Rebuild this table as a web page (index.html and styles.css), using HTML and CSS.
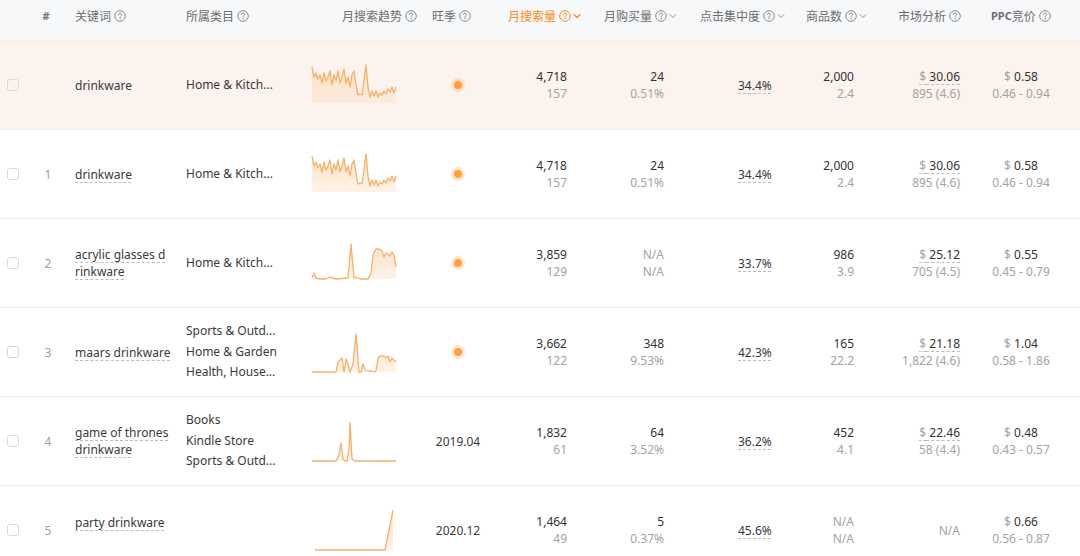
FILE: index.html
```html
<!DOCTYPE html>
<html lang="zh-CN">
<head>
<meta charset="utf-8">
<title>关键词列表</title>
<link rel="stylesheet" href="styles.css">
</head>
<body>
<svg width="0" height="0" class="defs">
  <defs>
    <linearGradient id="sparkfill" x1="0" y1="0" x2="0" y2="1">
      <stop offset="0" stop-color="#fdd7b0" stop-opacity="0.75"/>
      <stop offset="1" stop-color="#fde3c9" stop-opacity="0.45"/>
    </linearGradient>
    <symbol id="q" viewBox="0 0 12 12">
      <circle cx="6" cy="6" r="5.3" fill="none" stroke="currentColor" stroke-width="1"/>
      <path d="M4.4 4.7c0-.95.72-1.6 1.62-1.6.9 0 1.6.6 1.6 1.42 0 .7-.42 1-.9 1.32-.38.26-.62.5-.62 1.02v.34" fill="none" stroke="currentColor" stroke-width="1" stroke-linecap="round"/>
      <circle cx="6.1" cy="8.75" r="0.65" fill="currentColor"/>
    </symbol>
    <symbol id="chev" viewBox="0 0 8 8">
      <path d="M1 2.6 4 5.4 7 2.6" fill="none" stroke="currentColor" stroke-width="1.3" stroke-linecap="round" stroke-linejoin="round"/>
    </symbol>
  </defs>
</svg>
<div class="table">
  <div class="row head">
    <div class="c c1"></div>
    <div class="c c2 hc-center">#</div>
    <div class="c c3 h3">关键词<svg class="qi"><use href="#q"/></svg></div>
    <div class="c c4 h4">所属类目<svg class="qi"><use href="#q"/></svg></div>
    <div class="c c5 h5">月搜索趋势<svg class="qi"><use href="#q"/></svg></div>
    <div class="c c6 h6">旺季<svg class="qi"><use href="#q"/></svg></div>
    <div class="c c7 h7 active">月搜索量<svg class="qi"><use href="#q"/></svg><svg class="ch"><use href="#chev"/></svg></div>
    <div class="c c8 h8">月购买量<svg class="qi"><use href="#q"/></svg><svg class="ch"><use href="#chev"/></svg></div>
    <div class="c c9 h9">点击集中度<svg class="qi"><use href="#q"/></svg><svg class="ch"><use href="#chev"/></svg></div>
    <div class="c c10 h10">商品数<svg class="qi"><use href="#q"/></svg><svg class="ch"><use href="#chev"/></svg></div>
    <div class="c c11 h11">市场分析<svg class="qi"><use href="#q"/></svg></div>
    <div class="c c12 h12"><span class="ppc">PPC</span>竞价<svg class="qi"><use href="#q"/></svg></div>
  </div>

  <!-- row 0 (hovered) -->
  <div class="row body hl">
    <div class="c c1"><span class="cb"></span></div>
    <div class="c c2 idx"></div>
    <div class="c c3 kw"><span>drinkware</span></div>
    <div class="c c4 cat"><div>Home &amp; Kitch...</div></div>
    <div class="c c5 trend">
      <svg class="spark" viewBox="0 0 84 40">
        <path class="area" d="M0 2 L2 12 L4 8 L6 14 L8 10 L10 18 L12 8 L14 16 L16 12 L18 6 L20 20 L22 10 L24 16 L26 6 L28 18 L30 12 L32 4 L34 18 L36 12 L38 22 L40 10 L42 6 L44 20 L46 30 L48 29 L50 30 L52 16 L54 0 L56 22 L58 32 L60 26 L62 31 L64 26 L66 32 L68 28 L70 30 L72 26 L74 29 L76 24 L78 27 L80 22 L82 28 L84 22 L84 38 L0 38 Z"/>
        <polyline class="line" points="0,2 2,12 4,8 6,14 8,10 10,18 12,8 14,16 16,12 18,6 20,20 22,10 24,16 26,6 28,18 30,12 32,4 34,18 36,12 38,22 40,10 42,6 44,20 46,30 48,29 50,30 52,16 54,0 56,22 58,32 60,26 62,31 64,26 66,32 68,28 70,30 72,26 74,29 76,24 78,27 80,22 82,28 84,22"/>
      </svg>
    </div>
    <div class="c c6 season"><span class="dot"></span></div>
    <div class="c c7 num"><div class="p">4,718</div><div class="s">157</div></div>
    <div class="c c8 num"><div class="p">24</div><div class="s">0.51%</div></div>
    <div class="c c9 conc"><span class="u">34.4%</span></div>
    <div class="c c10 num"><div class="p">2,000</div><div class="s">2.4</div></div>
    <div class="c c11 num"><div class="p"><span class="u"><span class="cur">$</span> 30.06</span></div><div class="s">895 (4.6)</div></div>
    <div class="c c12 ppcv"><div class="p"><span class="cur">$</span> 0.58</div><div class="s">0.46 - 0.94</div></div>
  </div>

  <!-- row 1 -->
  <div class="row body">
    <div class="c c1"><span class="cb"></span></div>
    <div class="c c2 idx">1</div>
    <div class="c c3 kw"><span class="u">drinkware</span></div>
    <div class="c c4 cat"><div>Home &amp; Kitch...</div></div>
    <div class="c c5 trend">
      <svg class="spark" viewBox="0 0 84 40">
        <path class="area" d="M0 2 L2 12 L4 8 L6 14 L8 10 L10 18 L12 8 L14 16 L16 12 L18 6 L20 20 L22 10 L24 16 L26 6 L28 18 L30 12 L32 4 L34 18 L36 12 L38 22 L40 10 L42 6 L44 20 L46 30 L48 29 L50 30 L52 16 L54 0 L56 22 L58 32 L60 26 L62 31 L64 26 L66 32 L68 28 L70 30 L72 26 L74 29 L76 24 L78 27 L80 22 L82 28 L84 22 L84 38 L0 38 Z"/>
        <polyline class="line" points="0,2 2,12 4,8 6,14 8,10 10,18 12,8 14,16 16,12 18,6 20,20 22,10 24,16 26,6 28,18 30,12 32,4 34,18 36,12 38,22 40,10 42,6 44,20 46,30 48,29 50,30 52,16 54,0 56,22 58,32 60,26 62,31 64,26 66,32 68,28 70,30 72,26 74,29 76,24 78,27 80,22 82,28 84,22"/>
      </svg>
    </div>
    <div class="c c6 season"><span class="dot"></span></div>
    <div class="c c7 num"><div class="p">4,718</div><div class="s">157</div></div>
    <div class="c c8 num"><div class="p">24</div><div class="s">0.51%</div></div>
    <div class="c c9 conc"><span class="u">34.4%</span></div>
    <div class="c c10 num"><div class="p">2,000</div><div class="s">2.4</div></div>
    <div class="c c11 num"><div class="p"><span class="u"><span class="cur">$</span> 30.06</span></div><div class="s">895 (4.6)</div></div>
    <div class="c c12 ppcv"><div class="p"><span class="cur">$</span> 0.58</div><div class="s">0.46 - 0.94</div></div>
  </div>

  <!-- row 2 -->
  <div class="row body">
    <div class="c c1"><span class="cb"></span></div>
    <div class="c c2 idx">2</div>
    <div class="c c3 kw"><span class="u">acrylic glasses d<br>rinkware</span></div>
    <div class="c c4 cat"><div>Home &amp; Kitch...</div></div>
    <div class="c c5 trend">
      <svg class="spark" viewBox="0 0 84 40">
        <path class="area" d="M0 35 L2 30 L4 35 L8 36 L14 36 L18 34 L20 35 L24 36 L36 35 L39 1 L42 35 L44 34 L48 36 L56 36 L59 30 L61 12 L64 6 L67 6 L70 8 L72 14 L74 10 L76 11 L78 13 L80 9 L82 12 L84 24 L84 36 L0 36 Z"/>
        <polyline class="line" points="0,35 2,30 4,35 8,36 14,36 18,34 20,35 24,36 36,35 39,1 42,35 44,34 48,36 56,36 59,30 61,12 64,6 67,6 70,8 72,14 74,10 76,11 78,13 80,9 82,12 84,24"/>
      </svg>
    </div>
    <div class="c c6 season"><span class="dot"></span></div>
    <div class="c c7 num"><div class="p">3,859</div><div class="s">129</div></div>
    <div class="c c8 num"><div class="s">N/A</div><div class="s">N/A</div></div>
    <div class="c c9 conc"><span class="u">33.7%</span></div>
    <div class="c c10 num"><div class="p">986</div><div class="s">3.9</div></div>
    <div class="c c11 num"><div class="p"><span class="u"><span class="cur">$</span> 25.12</span></div><div class="s">705 (4.5)</div></div>
    <div class="c c12 ppcv"><div class="p"><span class="cur">$</span> 0.55</div><div class="s">0.45 - 0.79</div></div>
  </div>

  <!-- row 3 -->
  <div class="row body">
    <div class="c c1"><span class="cb"></span></div>
    <div class="c c2 idx">3</div>
    <div class="c c3 kw"><span class="u">maars drinkware</span></div>
    <div class="c c4 cat"><div>Sports &amp; Outd...</div><div>Home &amp; Garden</div><div>Health, House...</div></div>
    <div class="c c5 trend">
      <svg class="spark" viewBox="0 0 84 40">
        <path class="area" d="M0 40 L24 40 L26 30 L28 28 L30 26 L32 40 L34 27 L36 32 L38 40 L41 32 L44 2 L47 40 L49 40 L51 32 L53 38 L56 39 L60 39 L62 40 L64 39 L66 26 L68 24 L72 24 L74 26 L76 24 L78 30 L80 26 L82 28 L84 30 L84 40 Z"/>
        <polyline class="line" points="0,40 24,40 26,30 28,28 30,26 32,40 34,27 36,32 38,40 41,32 44,2 47,40 49,40 51,32 53,38 56,39 60,39 62,40 64,39 66,26 68,24 72,24 74,26 76,24 78,30 80,26 82,28 84,30"/>
      </svg>
    </div>
    <div class="c c6 season"><span class="dot"></span></div>
    <div class="c c7 num"><div class="p">3,662</div><div class="s">122</div></div>
    <div class="c c8 num"><div class="p">348</div><div class="s">9.53%</div></div>
    <div class="c c9 conc"><span class="u">42.3%</span></div>
    <div class="c c10 num"><div class="p">165</div><div class="s">22.2</div></div>
    <div class="c c11 num"><div class="p"><span class="u"><span class="cur">$</span> 21.18</span></div><div class="s">1,822 (4.6)</div></div>
    <div class="c c12 ppcv"><div class="p"><span class="cur">$</span> 1.04</div><div class="s">0.58 - 1.86</div></div>
  </div>

  <!-- row 4 -->
  <div class="row body">
    <div class="c c1"><span class="cb"></span></div>
    <div class="c c2 idx">4</div>
    <div class="c c3 kw"><span class="u">game of thrones drinkware</span></div>
    <div class="c c4 cat"><div>Books</div><div>Kindle Store</div><div>Sports &amp; Outd...</div></div>
    <div class="c c5 trend">
      <svg class="spark" viewBox="0 0 84 40">
        <path class="area" d="M0 40 L24 40 L27 34 L29 22 L31 38 L33 40 L35 40 L37 28 L38 2 L40 38 L43 40 L84 40 Z"/>
        <polyline class="line" points="0,40 24,40 27,34 29,22 31,38 33,40 35,40 37,28 38,2 40,38 43,40 84,40"/>
      </svg>
    </div>
    <div class="c c6 season"><span class="txt">2019.04</span></div>
    <div class="c c7 num"><div class="p">1,832</div><div class="s">61</div></div>
    <div class="c c8 num"><div class="p">64</div><div class="s">3.52%</div></div>
    <div class="c c9 conc"><span class="u">36.2%</span></div>
    <div class="c c10 num"><div class="p">452</div><div class="s">4.1</div></div>
    <div class="c c11 num"><div class="p"><span class="u"><span class="cur">$</span> 22.46</span></div><div class="s">58 (4.4)</div></div>
    <div class="c c12 ppcv"><div class="p"><span class="cur">$</span> 0.48</div><div class="s">0.43 - 0.57</div></div>
  </div>

  <!-- row 5 -->
  <div class="row body">
    <div class="c c1"><span class="cb"></span></div>
    <div class="c c2 idx">5</div>
    <div class="c c3 kw kw-top"><span class="u">party drinkware</span></div>
    <div class="c c4 cat"></div>
    <div class="c c5 trend">
      <svg class="spark" viewBox="0 0 84 40">
        <path class="area" d="M3 40 L73 40 L81 0 L81 40 Z"/>
        <polyline class="line" points="3,40 73,40 81,0"/>
      </svg>
    </div>
    <div class="c c6 season"><span class="txt">2020.12</span></div>
    <div class="c c7 num"><div class="p">1,464</div><div class="s">49</div></div>
    <div class="c c8 num"><div class="p">5</div><div class="s">0.37%</div></div>
    <div class="c c9 conc"><span class="u">45.6%</span></div>
    <div class="c c10 num"><div class="s">N/A</div><div class="s">N/A</div></div>
    <div class="c c11 num"><div class="s">N/A</div></div>
    <div class="c c12 ppcv"><div class="p"><span class="cur">$</span> 0.66</div><div class="s">0.56 - 0.87</div></div>
  </div>
</div>
</body>
</html>
```

FILE: styles.css
```css
html, body {
  margin: 0;
  padding: 0;
  overflow: hidden;
  background: #ffffff;
}
body {
  font-family: "Noto Sans", "Noto Sans CJK SC", sans-serif;
  font-size: 12px;
  color: #3a3a3a;
}
.defs {
  position: absolute;
  width: 0;
  height: 0;
}
.table {
  width: 1080px;
}
.row {
  display: grid;
  grid-template-columns: 30px 36px 112px 126px 112px 84px 90px 100px 110px 80px 100px 100px;
}
.head {
  height: 40px;
  background: #f7f8fa;
  border-bottom: 1px solid #f0f0f0;
  color: #6e6e6e;
  font-family: "Noto Sans CJK SC", "Noto Sans", sans-serif;
}
.head .c {
  display: flex;
  align-items: center;
  height: 32px;
  line-height: 16px;
  white-space: nowrap;
}
.head .hc-center {
  justify-content: center;
  font-family: "Noto Sans", sans-serif;
  font-weight: 700;
  color: #777;
  font-size: 11px;
  padding-right: 4px;
}
.qi {
  width: 12px;
  height: 12px;
  margin-left: 3px;
  color: #8c8c8c;
  flex: none;
}
.ch {
  width: 8px;
  height: 8px;
  margin-left: 2px;
  color: #c4c4c4;
  flex: none;
}
.head .active {
  color: #ff8a1c;
}
.head .active .qi,
.head .active .ch {
  color: #ff8a1c;
}
.ppc {
  font-family: "Noto Sans", sans-serif;
  font-weight: 700;
  font-size: 11px;
}
.h3 { padding-left: 9px; }
.h4 { padding-left: 8px; }
.h5 { padding-left: 38px; }
.h6 { padding-left: 16px; }
.h7 { padding-left: 8px; }
.h8 { padding-left: 14px; }
.h9 { padding-left: 10px; }
.h10 { padding-left: 6px; }
.h11 { padding-left: 18px; }
.h12 { padding-left: 11px; }

.body {
  height: 88px;
  border-bottom: 1px solid #eeeeee;
}
.body.hl {
  background: #fcf2ee;
}
.body .c {
  display: flex;
  flex-direction: column;
  justify-content: center;
  min-width: 0;
}
.c1 {
  align-items: flex-start;
  padding-left: 7px;
}
.cb {
  display: block;
  width: 10px;
  height: 10px;
  border: 1px solid #d9d9d9;
  border-radius: 3px;
  background: #fff;
}
.hl .cb {
  background: transparent;
}
.idx {
  align-items: center;
  color: #a0a0a0;
}
.kw {
  padding-left: 9px;
  padding-right: 7px;
  line-height: 17px;
}
.kw-top {
  padding-bottom: 16px;
}
.u {
  text-decoration: underline dashed #bdbdbd;
  text-decoration-thickness: 1px;
  text-underline-offset: 3px;
}
.cat {
  padding-left: 8px;
  line-height: 20.5px;
  white-space: nowrap;
  overflow: hidden;
}
.trend {
  padding-left: 8px;
}
.spark {
  display: block;
  width: 84px;
  height: 40px;
  overflow: visible;
}
.spark .area {
  fill: url(#sparkfill);
  stroke: none;
}
.spark .line {
  fill: none;
  stroke: #f7b06a;
  stroke-width: 1.3;
  stroke-linejoin: round;
}
.season {
  align-items: center;
}
.dot {
  display: block;
  width: 8px;
  height: 8px;
  border-radius: 50%;
  background: #ffa23e;
  box-shadow: 0 0 0 3px rgba(255, 170, 90, 0.28);
}
.txt {
  color: #3a3a3a;
}
.num {
  align-items: flex-end;
  line-height: 17px;
  white-space: nowrap;
}
.c7.num { padding-right: 23px; }
.c8.num { padding-right: 26px; }
.c10.num { padding-right: 26px; }
.c11.num { padding-right: 20px; }
.p {
  color: #333;
}
.s {
  color: #a3a3a3;
}
.cur {
  color: #a3a3a3;
}
.conc {
  padding-left: 48px;
  align-items: flex-start;
}
.ppcv {
  align-items: center;
  padding-right: 18px;
  line-height: 17px;
  white-space: nowrap;
}
```
